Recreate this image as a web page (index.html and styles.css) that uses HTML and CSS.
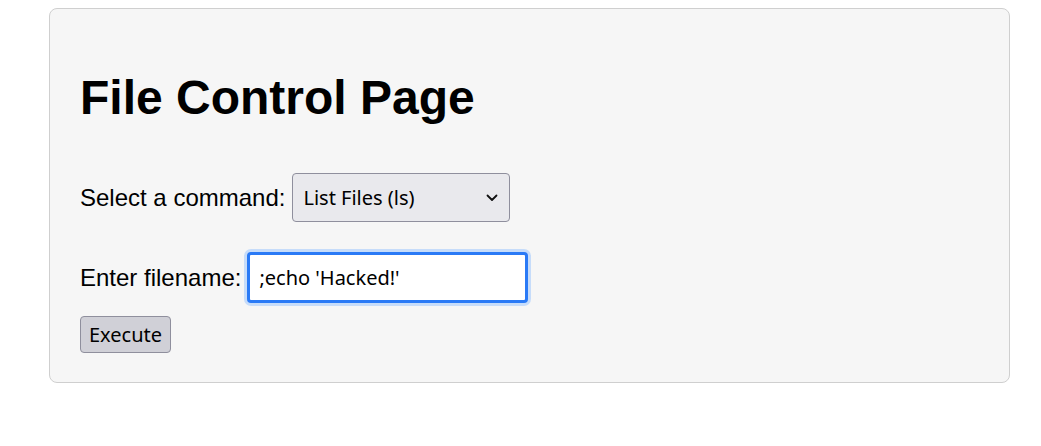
FILE: index.html
```html
<!DOCTYPE html>
<html>
<head>
<meta charset="utf-8">
<link rel="stylesheet" href="styles.css">
</head>
<body>
<div class="panel">
  <h1 class="title">File Control Page</h1>
  <form class="form">
    <div class="row row-select">
      <label class="label" for="cmd">Select a command:</label>
      <span class="select-wrap">
        <select id="cmd" class="select">
          <option>List Files (ls)</option>
        </select>
        <svg class="chev" width="12" height="8" viewBox="0 0 12 8"><path d="M1.5 1.5 L6 6 L10.5 1.5" fill="none" stroke="#111" stroke-width="1.8" stroke-linecap="round" stroke-linejoin="round"/></svg>
      </span>
    </div>
    <div class="row row-input">
      <label class="label" for="fname">Enter filename:</label>
      <input id="fname" class="input" type="text" value=";echo 'Hacked!'">
    </div>
    <button type="button" class="btn">Execute</button>
  </form>
</div>
</body>
</html>
```
FILE: styles.css
```css
html, body {
  margin: 0;
  padding: 0;
  background: #ffffff;
}
body {
  font-family: "Liberation Sans", Arial, sans-serif;
  color: #000;
  padding: 8px 31px 0 49px;
}
.panel {
  background: #f6f6f6;
  border: 1px solid #cfcfcf;
  border-radius: 8px;
  padding: 30px 30px 29px 30px;
}
.title {
  font-size: 48px;
  font-weight: bold;
  margin: 32px 0 48px 0;
  line-height: 54px;
}
.form {
  display: flex;
  flex-direction: column;
  align-items: flex-start;
}
.row {
  display: flex;
  align-items: center;
}
.row-select {
  margin-bottom: 30px;
}
.row-input {
  margin-bottom: 13px;
}
.label {
  font-size: 24px;
  margin-right: 6px;
}
.select-wrap {
  position: relative;
  display: inline-block;
  margin-left: 1px;
}
.select {
  appearance: none;
  -webkit-appearance: none;
  width: 218px;
  height: 49px;
  background: #e9e9ed;
  border: 1px solid #8f8f9d;
  border-radius: 4px;
  font-family: "Noto Sans", "Open Sans", sans-serif;
  font-size: 20px;
  color: #000;
  padding: 0 10px;
  margin: 0;
}
.chev {
  position: absolute;
  right: 12px;
  top: 21px;
  pointer-events: none;
}
.input {
  width: 281px;
  height: 51px;
  box-sizing: border-box;
  border: 3px solid #2a7af6;
  border-radius: 4px;
  box-shadow: 0 0 0 3px #c6dcfa;
  font-family: "Noto Sans", "Open Sans", sans-serif;
  font-size: 20px;
  padding: 0 9px;
  margin: 0;
  outline: none;
  background: #fff;
  color: #000;
}
.btn {
  font-family: "Noto Sans", "Open Sans", sans-serif;
  font-size: 20px;
  background: #d0d0d7;
  border: 1px solid #8f8f9d;
  border-radius: 4px;
  height: 37px;
  width: 91px;
  padding: 0;
  color: #000;
}
```
